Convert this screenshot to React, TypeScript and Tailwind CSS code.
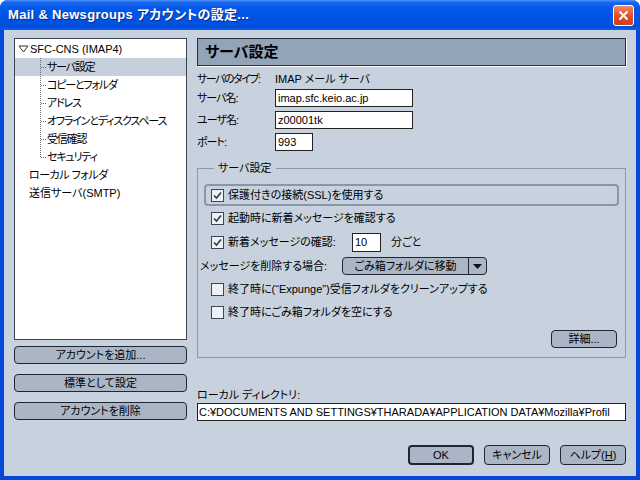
import React from 'react';

const FONT = "[font-family:'Liberation_Sans','Noto_Sans_CJK_JP',sans-serif] [font-feature-settings:'palt']";

function Check({ on }: { on: boolean }) {
  return (
    <span className="w-[13px] h-[13px] shrink-0 border border-[#3d4653] bg-[#eef1f5] flex items-center justify-center">
      {on && (
        <svg width="9" height="9" viewBox="0 0 9 9">
          <polyline points="1,4.5 3.5,7 8,1.5" fill="none" stroke="#2f3b4a" strokeWidth="1.6" />
        </svg>
      )}
    </span>
  );
}

function Btn({ label, className = '', primary = false }: { label: React.ReactNode; className?: string; primary?: boolean }) {
  return (
    <button
      className={`${primary ? 'border-2' : 'border'} border-[#1f2630] rounded-[4px] bg-[#aab6c6] text-black text-[11px] leading-none flex items-center justify-center ${className}`}
    >
      {label}
    </button>
  );
}

function TreeLine({ last }: { last?: boolean }) {
  return (
    <svg width="6" height="18" viewBox="0 0 6 18" className="shrink-0">
      <line x1="0.5" y1="0" x2="0.5" y2={last ? 9 : 18} stroke="#6b7380" strokeDasharray="1 1" />
      <line x1="1" y1="9.5" x2="6" y2="9.5" stroke="#6b7380" strokeDasharray="1 1" />
    </svg>
  );
}

export default function App() {
  const children = ['サーバ設定', 'コピーとフォルダ', 'アドレス', 'オフラインとディスクスペース', '受信確認', 'セキュリティ'];

  return (
    <div className={`w-[640px] h-[480px] flex flex-col bg-[#0348d8] rounded-t-[8px] overflow-hidden text-black text-[11px] whitespace-nowrap ${FONT}`}>
      {/* title bar */}
      <div className="h-[30px] shrink-0 flex items-center justify-between pl-[8px] pr-[6px] bg-[linear-gradient(to_bottom,#4a95fb_0%,#1a66ee_8%,#0058e8_30%,#0054e3_60%,#004fdc_88%,#0a5ef0_100%)]">
        <span className="text-white font-bold text-[13px] tracking-[0.3px] [text-shadow:1px_1px_0_#0a2a8a]">
          Mail &amp; Newsgroups アカウントの設定...
        </span>
        <div className="w-[21px] h-[21px] rounded-[3px] border border-white bg-[linear-gradient(to_bottom,#f08a66,#e0512c_50%,#c8401e)] flex items-center justify-center">
          <svg width="11" height="11" viewBox="0 0 11 11">
            <line x1="1.5" y1="1.5" x2="9.5" y2="9.5" stroke="white" strokeWidth="2" />
            <line x1="9.5" y1="1.5" x2="1.5" y2="9.5" stroke="white" strokeWidth="2" />
          </svg>
        </div>
      </div>

      {/* body */}
      <div className="flex-1 mx-[4px] mb-[4px] bg-[#c7d2de] flex pt-[8px] pl-[10px]">
        {/* left column */}
        <div className="w-[173px] flex flex-col">
          <div className="h-[302px] bg-white border border-[#3a4452] pt-[1px] overflow-hidden">
            <div className="h-[18px] flex items-center pl-[3px] gap-[1px]">
              <svg width="11" height="8" viewBox="0 0 11 8">
                <polygon points="1,1 10,1 5.5,7" fill="none" stroke="#333" strokeWidth="1" />
              </svg>
              <span>SFC-CNS (IMAP4)</span>
            </div>
            {children.map((c, i) => (
              <div key={c} className={`h-[18px] flex items-center pl-[25px] ${i === 0 ? 'bg-[#c6d0dc]' : ''}`}>
                <TreeLine last={i === children.length - 1} />
                <span className="pl-[1px] tracking-[-1.2px]">{c}</span>
              </div>
            ))}
            <div className="h-[18px] flex items-center pl-[14px] tracking-[-0.5px]">ローカル フォルダ</div>
            <div className="h-[18px] flex items-center pl-[14px]">送信サーバ(SMTP)</div>
          </div>
          <Btn label="アカウントを追加..." className="h-[18px] mt-[6px]" />
          <Btn label="標準として設定" className="h-[18px] mt-[10px]" />
          <Btn label="アカウントを削除" className="h-[18px] mt-[10px]" />
        </div>

        {/* right column */}
        <div className="w-[429px] ml-[10px] flex flex-col">
          <div className="h-[28px] bg-[#93a3b8] border border-[#26303d] shadow-[1px_1px_0_#ffffff] flex items-center pl-[7px]">
            <span className="font-bold text-[15px]">サーバ設定</span>
          </div>

          <div className="h-[20px] mt-[3px] flex items-center">
            <span className="w-[78px] tracking-[-1.5px]">サーバのタイプ:</span>
            <span>IMAP メール サーバ</span>
          </div>
          <div className="h-[18px] flex items-center">
            <span className="w-[78px] tracking-[-1px]">サーバ名:</span>
            <input readOnly defaultValue="imap.sfc.keio.ac.jp" className="w-[138px] h-[18px] bg-white border border-[#222] px-[2px] outline-none" />
          </div>
          <div className="h-[18px] mt-[4px] flex items-center">
            <span className="w-[78px] tracking-[-1px]">ユーザ名:</span>
            <input readOnly defaultValue="z00001tk" className="w-[138px] h-[18px] bg-white border border-[#222] px-[2px] outline-none" />
          </div>
          <div className="h-[18px] mt-[4px] flex items-center">
            <span className="w-[78px] tracking-[-1px]">ポート:</span>
            <input readOnly defaultValue="993" className="w-[38px] h-[18px] bg-white border border-[#222] px-[2px] outline-none" />
          </div>

          <fieldset className="mt-[9px] border border-[#8d99aa] px-[6px] pb-[9px] flex flex-col">
            <legend className="ml-[10px] px-[4px] h-[16px] leading-[16px]">サーバ設定</legend>
            <div className="mt-[8px] h-[22px] border-2 border-[#8a96a7] rounded-[4px] flex items-center pl-[5px] gap-[4px]">
              <Check on />
              <span>保護付きの接続(SSL)を使用する</span>
            </div>
            <div className="h-[24px] flex items-center pl-[7px] gap-[4px]">
              <Check on />
              <span>起動時に新着メッセージを確認する</span>
            </div>
            <div className="h-[24px] flex items-center pl-[7px] gap-[4px]">
              <Check on />
              <span className="w-[120px]">新着メッセージの確認:</span>
              <input readOnly defaultValue="10" className="w-[29px] h-[19px] bg-white border border-[#222] px-[2px] outline-none" />
              <span className="ml-[6px]">分ごと</span>
            </div>
            <div className="h-[24px] flex items-center -ml-[4px]">
              <span className="w-[142px]">メッセージを削除する場合:</span>
              <div className="w-[145px] h-[18px] border border-[#1f2630] rounded-[4px] bg-[#aab6c6] flex">
                <span className="flex-1 flex items-center justify-center border-r border-[#1f2630]">ごみ箱フォルダに移動</span>
                <span className="w-[17px] flex items-center justify-center">
                  <svg width="9" height="5" viewBox="0 0 9 5">
                    <polygon points="0,0 9,0 4.5,5" fill="#111" />
                  </svg>
                </span>
              </div>
            </div>
            <div className="h-[23px] flex items-center pl-[7px] gap-[4px]">
              <Check on={false} />
              <span>終了時に(“Expunge”)受信フォルダをクリーンアップする</span>
            </div>
            <div className="h-[23px] flex items-center pl-[7px] gap-[4px]">
              <Check on={false} />
              <span>終了時にごみ箱フォルダを空にする</span>
            </div>
            <div className="flex justify-end mt-[6px] pr-[2px]">
              <Btn label="詳細..." className="w-[66px] h-[18px]" />
            </div>
          </fieldset>

          <div className="h-[16px] mt-[29px] flex items-center">ローカル ディレクトリ:</div>
          <div className="h-[18px] bg-white border border-[#222] px-[1px] flex items-center overflow-hidden">
            C:¥DOCUMENTS AND SETTINGS¥THARADA¥APPLICATION DATA¥Mozilla¥Profil
          </div>

          <div className="flex justify-end gap-[10px] mt-[24px]">
            <Btn primary label="OK" className="w-[66px] h-[20px]" />
            <Btn label="キャンセル" className="w-[66px] h-[20px]" />
            <Btn label={<span>ヘルプ(<span className="underline">H</span>)</span>} className="w-[66px] h-[20px]" />
          </div>
        </div>
      </div>
    </div>
  );
}
